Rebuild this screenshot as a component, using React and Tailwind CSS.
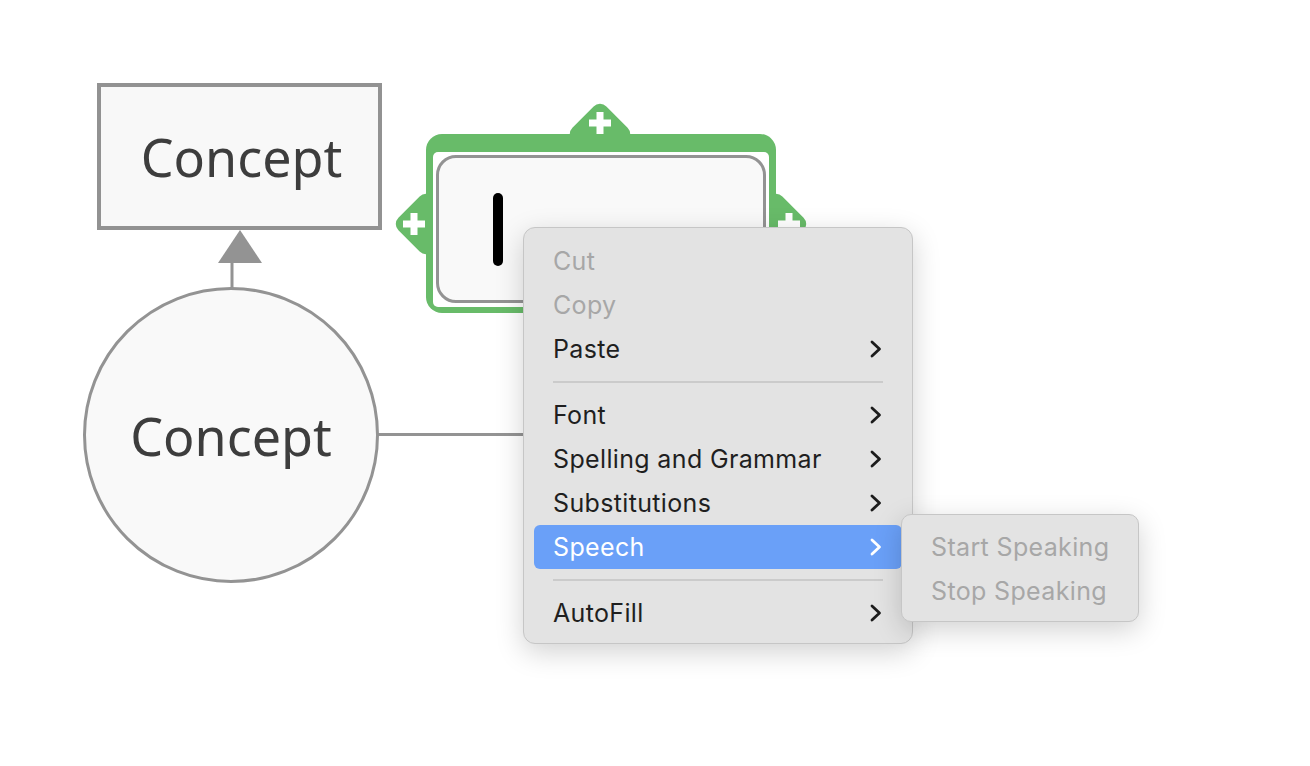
import React from "react";

const Chevron = ({ light }) => (
  <svg width="12" height="18" viewBox="0 0 12 18" className="shrink-0">
    <polyline
      points="2,2 9.5,9 2,16"
      fill="none"
      stroke={light ? "#ffffff" : "#1c1c1c"}
      strokeWidth="2.8"
      strokeLinecap="round"
      strokeLinejoin="round"
    />
  </svg>
);

const MenuItem = ({ label, disabled, active, submenu }) => (
  <div
    className={`h-[44px] mx-[10px] pl-[19px] pr-[20px] flex items-center justify-between rounded-[6px] ${
      active ? "bg-[#6aa0f8] text-white" : disabled ? "text-[#a7a7a7]" : "text-[#1f1f1f]"
    }`}
  >
    <span className="text-[25px] leading-none tracking-[0.35px] whitespace-nowrap">{label}</span>
    {submenu && <Chevron light={active} />}
  </div>
);

const Separator = () => <div className="mx-[29px] my-[10px] h-[2px] bg-[#cbcbcb]" />;

const Plus = ({ x, y }) => (
  <g transform={`translate(${x} ${y})`} fill="#ffffff">
    <rect x="-11" y="-3.5" width="22" height="7" />
    <rect x="-3.5" y="-11" width="7" height="22" />
  </g>
);

const conceptFont = { fontFamily: "'Noto Sans', 'Open Sans', sans-serif" };

export default function App() {
  return (
    <div
      className="relative w-[1310px] h-[766px] bg-white overflow-hidden"
      style={{ fontFamily: "Inter, 'Liberation Sans', sans-serif" }}
    >
      {/* edges */}
      <svg className="absolute inset-0" width="1310" height="766">
        <line x1="232" y1="258" x2="232" y2="290" stroke="#939393" strokeWidth="3" />
        <polygon points="240,230 218,263 262,263" fill="#939393" />
        <line x1="376" y1="434.5" x2="640" y2="434.5" stroke="#939393" strokeWidth="3" />
      </svg>

      {/* rectangle concept */}
      <div className="absolute left-[97px] top-[83px] w-[285px] h-[147px] border-[4px] border-[#929292] bg-[#f8f8f8] flex items-center justify-center">
        <span className="text-[52px] leading-none text-[#3d3d3d] pl-[4px]" style={conceptFont}>
          Concept
        </span>
      </div>

      {/* circle concept */}
      <div className="absolute left-[83px] top-[287px] w-[296px] h-[296px] rounded-full border-[3px] border-[#939393] bg-[#f9f9f9] flex items-center justify-center">
        <span className="text-[52px] leading-none text-[#3d3d3d] pt-[2px]" style={conceptFont}>
          Concept
        </span>
      </div>

      {/* selected node being edited */}
      <svg className="absolute inset-0" width="1310" height="766">
        <rect x="576" y="110" width="48" height="48" rx="9" fill="#68bb69" transform="rotate(45 600 134)" />
        <rect x="402" y="200" width="48" height="48" rx="9" fill="#68bb69" transform="rotate(45 426 224)" />
        <rect x="752" y="200" width="48" height="48" rx="9" fill="#68bb69" transform="rotate(45 776 224)" />
        <rect x="426" y="134" width="350" height="179" rx="16" fill="#68bb69" />
        <rect x="433" y="152" width="336" height="155" rx="5" fill="#ffffff" />
        <Plus x={600} y={123} />
        <Plus x={414} y={224} />
        <Plus x={789} y={224} />
      </svg>
      <div className="absolute left-[436px] top-[155px] w-[330px] h-[148px] rounded-[20px] border-[3px] border-[#939393] bg-[#f9f9f9]">
        <div className="absolute left-[54px] top-[35px] w-[10px] h-[73px] rounded-full bg-black" />
      </div>

      {/* context menu */}
      <div className="absolute left-[523px] top-[227px] w-[390px] pt-[11px] pb-[8px] rounded-[12px] border border-[#c6c6c6] bg-[#e3e3e3] shadow-[0_8px_28px_rgba(0,0,0,0.18)]">
        <MenuItem label="Cut" disabled />
        <MenuItem label="Copy" disabled />
        <MenuItem label="Paste" submenu />
        <Separator />
        <MenuItem label="Font" submenu />
        <MenuItem label="Spelling and Grammar" submenu />
        <MenuItem label="Substitutions" submenu />
        <MenuItem label="Speech" submenu active />
        <Separator />
        <MenuItem label="AutoFill" submenu />
      </div>

      {/* speech submenu */}
      <div className="absolute left-[901px] top-[514px] w-[238px] pt-[10px] pb-[8px] rounded-[10px] border border-[#c6c6c6] bg-[#e3e3e3] shadow-[0_8px_28px_rgba(0,0,0,0.18)]">
        <MenuItem label="Start Speaking" disabled />
        <MenuItem label="Stop Speaking" disabled />
      </div>
    </div>
  );
}
